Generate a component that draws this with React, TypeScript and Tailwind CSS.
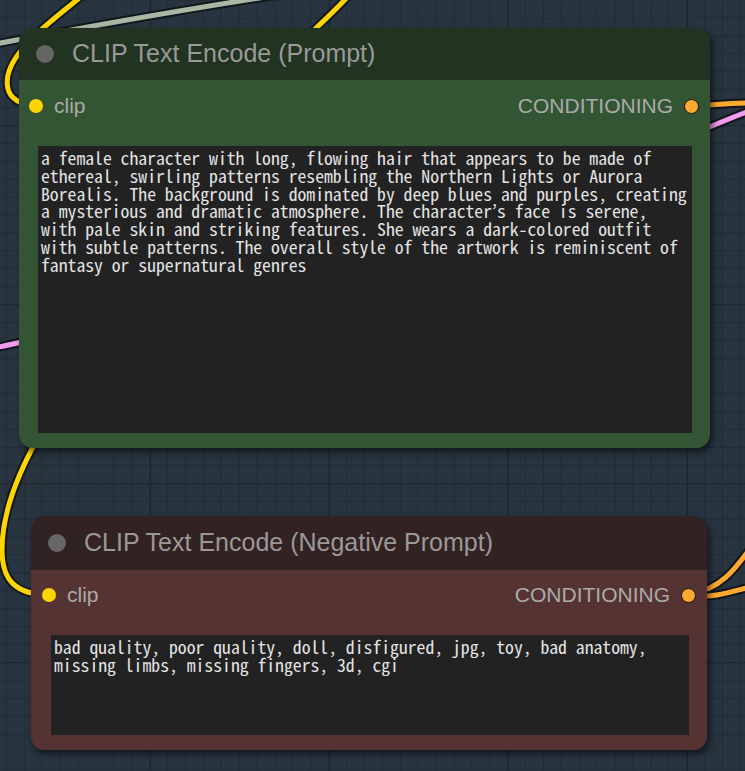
import React from "react";

const positive = [
  "a female character with long, flowing hair that appears to be made of",
  "ethereal, swirling patterns resembling the Northern Lights or Aurora",
  "Borealis. The background is dominated by deep blues and purples, creating",
  "a mysterious and dramatic atmosphere. The character’s face is serene,",
  "with pale skin and striking features. She wears a dark-colored outfit",
  "with subtle patterns. The overall style of the artwork is reminiscent of",
  "fantasy or supernatural genres",
].join("\n");

const negative = [
  "bad quality, poor quality, doll, disfigured, jpg, toy, bad anatomy,",
  "missing limbs, missing fingers, 3d, cgi",
].join("\n");

// wires drawn on the canvas: [path, colour]
const wires: [string, string][] = [
  ["M -10 45 C 80 28, 180 10, 285 -6", "#a9b7a4"],
  ["M 84 -6 C 60 15, 15 45, 8 75 C 4 95, 15 104, 36 106", "#ffd500"],
  ["M 352 -8 C 336 10, 322 22, 308 36", "#ffd500"],
  ["M 692 106 C 715 105, 730 103, 752 103", "#ffa931"],
  ["M 690 135 C 710 127, 730 118, 752 110", "#f29bf0"],
  ["M -6 348 C 5 346, 12 344, 26 341", "#f29bf0"],
  ["M 38 438 C 20 470, 2 510, 2 550 C 2 580, 15 594, 48 595", "#ffd500"],
  ["M 689 594 C 720 590, 735 570, 754 543", "#ffa931"],
  ["M 689 596 C 715 598, 730 592, 754 586", "#ffa931"],
];

function Canvas() {
  return (
    <svg className="absolute inset-0" width={745} height={771}>
      <defs>
        <pattern id="minor" x={6} y={-0.4} width={17.9} height={17.9} patternUnits="userSpaceOnUse">
          <path d="M 0 0 H 17.9 M 0 0 V 17.9" stroke="#222c36" strokeWidth={2} fill="none" />
        </pattern>
        <pattern id="major" x={150} y={125} width={179} height={179} patternUnits="userSpaceOnUse">
          <path d="M 0 0 H 179 M 0 0 V 179" stroke="#1f2830" strokeWidth={2.4} fill="none" />
        </pattern>
      </defs>
      <rect width={745} height={771} fill="url(#minor)" />
      <rect width={745} height={771} fill="url(#major)" />
      {wires.map(([d, color], i) => (
        <g key={i} fill="none" strokeLinecap="round">
          <path d={d} stroke="#12171c" strokeWidth={9} />
          <path d={d} stroke={color} strokeWidth={5} />
        </g>
      ))}
    </svg>
  );
}

type NodeProps = {
  title: string;
  text: string;
  box: string;
  head: string;
  body: string;
  row: string;
  areaTop: string;
  pad: string;
};

function Node({ title, text, box, head, body, row, areaTop, pad }: NodeProps) {
  return (
    <div className={`absolute flex flex-col rounded-[14px] shadow-[3px_4px_7px_rgba(0,0,0,0.55)] ${box}`}>
      {/* title bar */}
      <div className={`flex items-center rounded-t-[14px] ${head}`}>
        <div className="ml-[17px] w-[18px] h-[18px] rounded-full bg-[#666]" />
        <span className="ml-[18px] text-[25px] text-[#999] font-['Liberation_Sans',Arial,sans-serif]">
          {title}
        </span>
      </div>

      <div className={`flex-1 flex flex-col rounded-b-[14px] pb-[15px] ${body} ${pad}`}>
        {/* slots */}
        <div className={`flex items-center justify-between -ml-[9px] -mr-[7px] font-['Liberation_Sans',Arial,sans-serif] text-[21px] text-[#aaa] ${row}`}>
          <div className="flex items-center gap-[11px]">
            <div className="w-[14px] h-[14px] rounded-full bg-[#ffd500]" />
            <span>clip</span>
          </div>
          <div className="flex items-center gap-[11px]">
            <span>CONDITIONING</span>
            <div className="w-[15px] h-[15px] rounded-full bg-[#ffa931] border-[1.5px] border-[#111]" />
          </div>
        </div>

        <textarea
          readOnly
          wrap="off"
          value={text}
          className={`flex-1 resize-none overflow-hidden bg-[#222] text-[#e4e4e4] px-[3px] pt-[3px] outline-none whitespace-pre text-[17.7px] leading-[17.8px] font-['Noto_Sans_Mono_CJK_JP','Liberation_Mono',monospace] ${areaTop}`}
        />
      </div>
    </div>
  );
}

export default function App() {
  return (
    <div className="relative w-[745px] h-[771px] overflow-hidden bg-[#28343f]">
      <Canvas />

      <Node
        title="CLIP Text Encode (Prompt)"
        text={positive}
        box="left-[19px] top-[28px] w-[691px] h-[420px]"
        head="h-[52px] bg-[#223322]"
        body="bg-[#335533]"
        row="h-[52px]"
        areaTop="mt-[14px]"
        pad="pl-[19px] pr-[18px]"
      />

      <Node
        title="CLIP Text Encode (Negative Prompt)"
        text={negative}
        box="left-[31px] top-[516px] w-[676px] h-[234px]"
        head="h-[54px] bg-[#332222]"
        body="bg-[#553333]"
        row="h-[50px]"
        areaTop="mt-[15px]"
        pad="pl-[20px] pr-[18px]"
      />
    </div>
  );
}
